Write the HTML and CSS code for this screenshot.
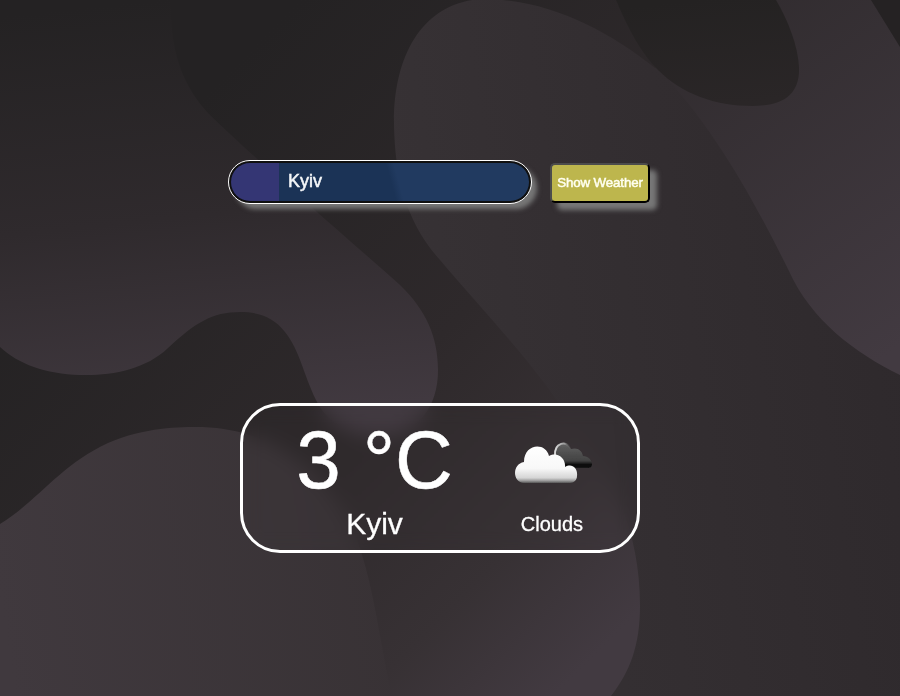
FILE: index.html
```html
<!DOCTYPE html>
<html lang="en">
<head>
<meta charset="utf-8">
<title>Weather</title>
<link rel="stylesheet" href="styles.css">
</head>
<body>
<svg class="backdrop" viewBox="0 0 900 696" preserveAspectRatio="none" aria-hidden="true">
  <defs>
    <linearGradient id="base" gradientUnits="userSpaceOnUse" x1="150" y1="150" x2="625" y2="625"><stop offset="0" stop-color="#242223"/><stop offset=".5" stop-color="#2e292b"/><stop offset=".8" stop-color="#373134"/><stop offset="1" stop-color="#423a41"/></linearGradient>
    <linearGradient id="left" gradientUnits="userSpaceOnUse" x1="160" y1="0" x2="205" y2="435"><stop offset="0" stop-color="#242223"/><stop offset=".5" stop-color="#2f2a2d"/><stop offset="1" stop-color="#423a41"/></linearGradient>
    <linearGradient id="mid" gradientUnits="userSpaceOnUse" x1="395" y1="350" x2="920" y2="270"><stop offset="0" stop-color="#373235"/><stop offset="1" stop-color="#2e292c"/></linearGradient>
    <linearGradient id="right" gradientUnits="userSpaceOnUse" x1="660" y1="50" x2="880" y2="360"><stop offset="0" stop-color="#312c2f"/><stop offset="1" stop-color="#423a41"/></linearGradient>
    <linearGradient id="blob" gradientUnits="userSpaceOnUse" x1="700" y1="0" x2="710" y2="106"><stop offset="0" stop-color="#242222"/><stop offset="1" stop-color="#2a2627"/></linearGradient>
    <linearGradient id="low" gradientUnits="userSpaceOnUse" x1="0" y1="600" x2="385" y2="540"><stop offset="0" stop-color="#40393e"/><stop offset="1" stop-color="#383235"/></linearGradient>
  </defs>
  <rect width="900" height="696" fill="url(#base)"/>
  <path fill="url(#left)" d="M0 0H171C170 55 184 88 211 116C265 168 337 229 400 285C426 310 438 337 438 370C438 407 418 435 380 435C346 435 326 421 316 400C303 373 300 351 285 332C274 317 258 312 240 312C212 312 195 323 168 348C145 370 110 376 80 375C46 374 18 364 0 347Z"/>
  <path fill="url(#mid)" d="M485 -1C425 0 393 53 394 125C395 177 406 222 440 260C480 307 518 347 548 388C586 443 640 500 640 606C640 645 630 672 611 696H900V0H740L655 68C607 30 550 0 485 -1Z"/>
  <path fill="url(#right)" d="M655 66C715 127 755 203 789 271C811 320 855 353 900 375V0H700Z"/>
  <path fill="url(#blob)" d="M616 0C629 31 642 54 658 70C682 94 715 106 752 106C785 106 800 93 799 67C798 46 788 20 776 0Z"/>
  <path fill="#252223" d="M871 0L900 47V0Z"/>
  <path fill="url(#low)" d="M0 524C39 500 60 465 108 443C145 427 180 427 202 427C282 430 329 479 354 533C373 577 379 639 392 696H0Z"/>
</svg>
<main class="app">
  <form class="search">
    <div class="field"><span class="field-icon"></span><span class="field-value">Kyiv</span></div>
    <button class="submit" type="button">Show Weather</button>
  </form>
  <section class="card">
    <div class="reading">
      <div class="temp">3 °C</div>
      <div class="city">Kyiv</div>
    </div>
    <div class="sky">
      <svg class="clouds" viewBox="0 0 100 65" aria-hidden="true">
        <defs>
          <linearGradient id="white" x1="0" y1="0" x2="0" y2="1"><stop offset="0" stop-color="#fff"/><stop offset=".6" stop-color="#f8f8f8"/><stop offset=".86" stop-color="#d5d5d5"/><stop offset=".94" stop-color="#999"/><stop offset="1" stop-color="#555"/></linearGradient>
          <linearGradient id="dark" x1="0" y1="0" x2="0" y2="1"><stop offset="0" stop-color="#606060"/><stop offset=".7" stop-color="#424242"/><stop offset=".88" stop-color="#080808"/><stop offset="1" stop-color="#151515"/></linearGradient>
          <linearGradient id="rim" x1="0" y1="0" x2="1" y2="0"><stop offset="0" stop-color="#ddd"/><stop offset=".6" stop-color="#999"/><stop offset="1" stop-color="#555" stop-opacity="0"/></linearGradient>
          <filter id="soft"><feGaussianBlur stdDeviation=".65"/></filter>
        </defs>
        <g filter="url(#soft)">
          <path fill="url(#dark)" d="M49 37V22C49 11 62 12 65 19C72 17 76 21 77 26C82 26 86 30 86 34C86 37 84 38 81 38H49Z"/>
          <path fill="none" stroke="url(#rim)" stroke-width="2" d="M49 26C48 12 61 10 65 19"/>
          <path fill="url(#white)" d="M18 53C6 52 6 34 18 32C18 13 40 12 43 26C52 21 60 29 59 37C66 33 72 38 71 46C71 50 68 53 64 53Z"/>
        </g>
      </svg>
      <div class="condition">Clouds</div>
    </div>
  </section>
</main>
</body>
</html>
```
FILE: styles.css
```css
* { box-sizing: border-box; }
body {
  margin: 0;
  height: 696px;
  overflow: hidden;
  background: #2b2728;
  color: #fff;
  font-family: "Liberation Sans", Arial, sans-serif;
}
.backdrop {
  position: fixed;
  inset: 0;
  width: 100%;
  height: 100%;
  z-index: -1;
}
.app {
  display: flex;
  flex-direction: column;
  padding-top: 160px;
}
.search {
  display: flex;
  align-items: flex-start;
  gap: 18px;
  margin-left: 228px;
}
.field {
  display: flex;
  width: 304px;
  height: 44px;
  border: 1px solid #fff;
  border-radius: 22px;
  background: #101010;
  padding: 2px;
  box-shadow: 6px 6px 5px -1px #777;
}
.field-icon {
  width: 48px;
  background: #343674;
  border-radius: 19px 0 0 19px;
}
.field-value {
  flex: 1;
  padding-left: 9px;
  color: #f4f6f8;
  font-size: 18px;
  line-height: 36px;
  -webkit-text-stroke: .5px #f4f6f8;
  border-radius: 0 19px 19px 0;
  background: linear-gradient(75deg, #1b3356 45%, #213a60 48%);
}
.submit {
  width: 100px;
  height: 40px;
  margin-top: 3px;
  padding: 0 0 2px;
  border: 2px solid;
  border-color: #4c4c4c #000 #000 #4c4c4c;
  border-radius: 5px;
  background: #bdb64d;
  color: #fffff0;
  font: 13.333px "Liberation Sans", Arial, sans-serif;
  letter-spacing: -.12px;
  -webkit-text-stroke: .5px #fffff0;
  white-space: nowrap;
  box-shadow: 7px 7px 5px #777;
}
.card {
  display: flex;
  width: 400px;
  height: 150px;
  margin: 199px 0 0 240px;
  border: 3px solid #fff;
  border-radius: 40px;
  backdrop-filter: blur(10px);
}
.reading {
  width: 263px;
  text-align: center;
}
.temp {
  padding-top: 7px;
  font-size: 80px;
  line-height: 94px;
  -webkit-text-stroke: .5px #fff;
  transform: scaleY(1.03);
}
.city {
  font-size: 30px;
  line-height: 34px;
  -webkit-text-stroke: .3px #fff;
}
.sky {
  display: flex;
  flex-direction: column;
  align-items: center;
  width: 92px;
  padding-top: 24px;
}
.clouds {
  width: 100px;
  height: 65px;
  flex: none;
  margin-left: 7px;
}
.condition {
  margin-top: 18px;
  font-size: 20px;
  line-height: 23px;
  -webkit-text-stroke: .3px #fff;
}
```
